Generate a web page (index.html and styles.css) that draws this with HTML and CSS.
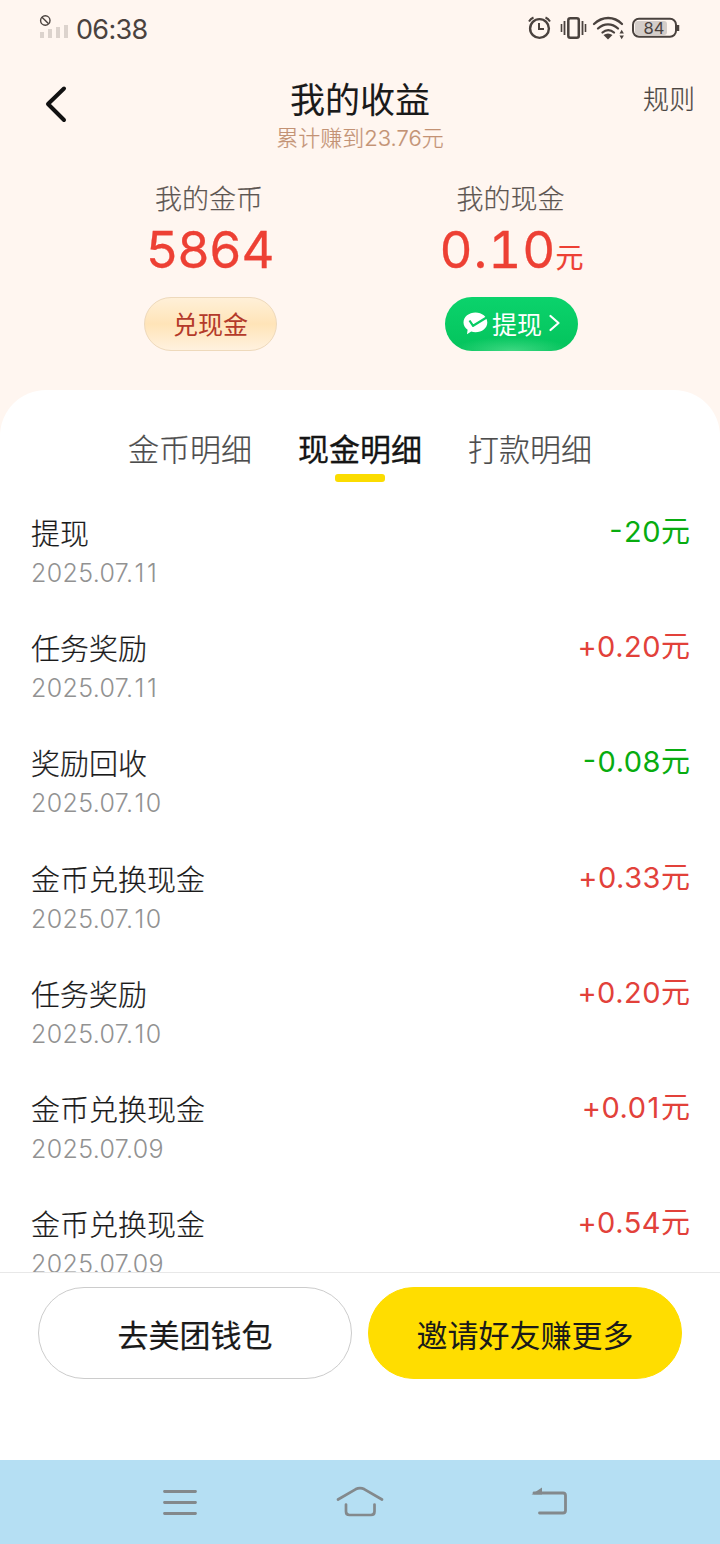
FILE: index.html
```html
<!DOCTYPE html>
<html lang="zh-CN">
<head>
<meta charset="utf-8">
<title>我的收益</title>
<link rel="stylesheet" href="styles.css">
</head>
<body>
<div class="app">
  <div class="status">
    <div class="status-left">
      <svg class="signal" width="32" height="28" viewBox="0 0 32 28" fill="none">
        <circle cx="7.3" cy="6.5" r="4.7" stroke="#4a423e" stroke-width="1.4"/>
        <path d="M4 3.2l6.6 6.600" stroke="#4a423e" stroke-width="1.4"/>
        <path d="M4 24v-6M12 24v-9M20 24V13M28 24V11" stroke="#dcd3cd" stroke-width="4"/>
      </svg>
      <span class="clock">06:38</span>
    </div>
    <svg class="status-icons" width="156" height="28" viewBox="0 0 156 28" fill="none" stroke="#4a423e">
      <circle cx="14.5" cy="14.5" r="9.4" stroke-width="2.4"/>
      <path d="M14 9v6h5" stroke-width="2"/>
      <path d="M4 7.5a10 10 0 0 1 4.500-4M25 7.500a10 10 0 0 0-4.500-4" stroke-width="2"/>
      <rect x="43.300" y="4.300" width="10.500" height="19.500" rx="2" stroke-width="2.500"/>
      <path d="M39.500 7v14M57.500 7v14" stroke-width="1.800"/>
      <path d="M36.500 10v8M60.500 10v8" stroke-width="1.600"/>
      <path d="M69 10c8.500-8 20-8 28 0M73 14.500c6-5.500 14-5.500 20 0M77.500 18.500c3.500-3 8-3 11.500 0" stroke-width="2.300" stroke-linecap="round"/>
      <path d="M78.500 21q4.500-3 9 0l-4.500 4.500z" fill="#4a423e" stroke="none"/>
      <path d="M94.500 19.500l2.200-3.800l2.200 3.800zM94.500 21.500l2.200 3.800l2.200-3.800z" fill="#4a423e" stroke="none"/>
      <rect x="110" y="7" width="32" height="14" rx="3" fill="#d4cdc9" stroke="none"/>
      <rect x="108" y="4.800" width="43" height="18" rx="6" stroke-width="2"/>
      <path d="M153 11v6" stroke-width="2.500"/>
      <text class="battery" x="129" y="20" text-anchor="middle">84</text>
    </svg>
  </div>

  <header class="header">
    <svg class="back" width="24" height="38" viewBox="0 0 24 38" fill="none" stroke="#111" stroke-width="4" stroke-linecap="round" stroke-linejoin="round"><path d="M20 3.500L4 19l16 16"/></svg>
    <div class="heading">
      <h1 class="title">我的收益</h1>
      <p class="subtitle">累计赚到23.76元</p>
    </div>
    <a class="rules">规则</a>
  </header>

  <section class="balances">
    <div class="balance">
      <span class="label shift">我的金币</span>
      <span class="value">5864</span>
      <button class="pill gold">兑现金</button>
    </div>
    <div class="balance">
      <span class="label shift-cash">我的现金</span>
      <span class="value cash">0.10<small class="unit">元</small></span>
      <button class="pill green">
        <svg width="25" height="23" viewBox="0 0 25 23"><path d="M12.500.5C19 .5 24.300 4.800 24.300 10.500S19 20.300 12.500 20.300c-1.500 0-3-.2-4.300-.7L4 22.200l.6-4.400C2 16 .5 13.400.5 10.500.5 4.800 6 .5 12.500.5z" fill="#fff"/><path d="M6.500 8.500l3.600 5.300L24 5.200" fill="none" stroke="#07cc65" stroke-width="2.200" stroke-linejoin="round"/></svg>
        <span class="pill-text">提现</span>
        <svg class="chevron" width="11" height="18" viewBox="0 0 11 18" fill="none" stroke="#fff" stroke-width="2.200" stroke-linecap="round" stroke-linejoin="round"><path d="M1.500 2l8 7-8 7"/></svg>
      </button>
    </div>
  </section>

  <main class="sheet">
    <nav class="tabs">
      <a class="tab">金币明细</a>
      <a class="tab active">现金明细</a>
      <a class="tab">打款明细</a>
    </nav>
    <ul class="list">
      <li class="row"><div><div class="name">提现</div><div class="date">2025.07.<span class="one">1</span><span class="one">1</span></div></div><div class="amount out"><span class="minus">-</span>20元</div></li>
      <li class="row"><div><div class="name">任务奖励</div><div class="date">2025.07.<span class="one">1</span><span class="one">1</span></div></div><div class="amount">+0.20元</div></li>
      <li class="row"><div><div class="name">奖励回收</div><div class="date">2025.07.<span class="one">1</span>0</div></div><div class="amount out"><span class="minus">-</span>0.08元</div></li>
      <li class="row"><div><div class="name">金币兑换现金</div><div class="date">2025.07.<span class="one">1</span>0</div></div><div class="amount">+0.33元</div></li>
      <li class="row"><div><div class="name">任务奖励</div><div class="date">2025.07.<span class="one">1</span>0</div></div><div class="amount">+0.20元</div></li>
      <li class="row"><div><div class="name">金币兑换现金</div><div class="date">2025.07.09</div></div><div class="amount">+0.0<span class="one">1</span>元</div></li>
      <li class="row"><div><div class="name">金币兑换现金</div><div class="date">2025.07.09</div></div><div class="amount">+0.54元</div></li>
    </ul>
  </main>

  <footer class="actions">
    <button class="action">去美团钱包</button>
    <button class="action primary">邀请好友赚更多</button>
  </footer>

  <div class="navbar">
    <svg width="36" height="30" viewBox="0 0 36 30" fill="none" stroke="#83898c" stroke-width="2.800" stroke-linecap="round"><path d="M2.500 4.500h31M2.500 15.500h31M2.500 26.500h31"/></svg>
    <svg class="home" width="50" height="34" viewBox="0 0 50 34" fill="none" stroke="#83898c" stroke-width="2.700" stroke-linecap="round" stroke-linejoin="round"><path d="M3 15.500L20.500 5.300q4.500-2.400 9 0L47 15.500M11 20.500v7q0 3.500 3.500 3.500h21.500q3.500 0 3.500-3.500V20.500"/></svg>
    <svg class="return" width="38" height="32" viewBox="0 0 38 32" fill="none" stroke="#83898c" stroke-width="2.800" stroke-linecap="round"><path d="M4 7h29q2.500 0 2.500 2.500v15q0 2.500-2.500 2.500H9.500"/><path d="M1.500 8.400L12 1.500v6.900z" fill="#83898c" stroke="none"/></svg>
  </div>
</div>
</body>
</html>
```
FILE: styles.css
```css
* { box-sizing: border-box; }
body { margin: 0; font-family: Inter, "Noto Sans CJK SC", sans-serif; color: #1a1a1a; }
h1, p, ul { margin: 0; padding: 0; font-weight: 400; list-style: none; }
button { font: inherit; color: inherit; padding: 0; border: 0; }

.app { width: 720px; height: 1544px; display: flex; flex-direction: column; background: #fff6f0; overflow: hidden; }

.status { height: 56px; flex: none; display: flex; justify-content: space-between; padding: 14px 39px 0 38px; color: #4a423e; }
.status-left { display: flex; gap: 6px; }
.clock { font-size: 27px; line-height: 32px; letter-spacing: -0.7px; }
.battery { font-family: Inter, sans-serif; font-size: 16.500px; fill: #4a423e; stroke: none; }

.header { height: 124px; flex: none; display: grid; grid-template-columns: 160px 1fr 160px; padding-top: 19px; }
.back { margin: 10px 0 0 44px; }
.heading { text-align: center; }
.title { font-size: 35px; line-height: 50px; -webkit-text-stroke: 0.1px; }
.subtitle { font-size: 22px; line-height: 26px; font-weight: 300; color: #c39274; -webkit-text-stroke: 0.2px; }
.rules { justify-self: end; margin-right: 25px; font-size: 26px; line-height: 49px; font-weight: 300; color: #4c4642; -webkit-text-stroke: 0.2px; }

.balances { height: 210px; flex: none; display: grid; grid-template-columns: 301px 301px; padding: 1px 0 0 60px; }
.balance { display: flex; flex-direction: column; align-items: center; }
.label { font-size: 27px; line-height: 37px; font-weight: 300; color: #5c5551; -webkit-text-stroke: 0.2px; }
.shift { margin-right: 3px; }
.shift-cash { margin-right: 2px; }
.value { font-size: 51px; line-height: 64px; height: 79px; color: #ed4034; -webkit-text-stroke: 0.3px; letter-spacing: 0.3px; }
.cash { letter-spacing: 1px; font-feature-settings: "tnum"; }
.unit { font-size: 28px; margin-left: -1px; letter-spacing: 0; -webkit-text-stroke: 0.2px; }
.pill { width: 133px; height: 54px; border-radius: 27px; font-size: 25px; display: flex; align-items: center; justify-content: center; padding-bottom: 2px; }
.gold { color: #b43a2a; border: 1px solid #eed9bb; background: linear-gradient(#fff0d8, #ffe4b8 50%, #fff1df); }
.green { color: #fff; background: radial-gradient(ellipse 60px 14px at 50% 100%, #3ed882, transparent), linear-gradient(#0bd36c, #04c35c); }
.pill-text { margin-left: 4px; }
.chevron { margin-left: 7px; }

.sheet { flex: 1; min-height: 0; background: #fff; border-radius: 46px 46px 0 0; padding-top: 36px; overflow: hidden; }
.tabs { display: flex; justify-content: center; gap: 46px; height: 83px; }
.tab { font-size: 31px; line-height: 48px; font-weight: 300; color: #4c4c4c; height: 56px; position: relative; -webkit-text-stroke: 0.2px; }
.active { font-weight: 400; color: #151515; -webkit-text-stroke: 0.3px; }
.active::after { content: ""; position: absolute; left: 50%; bottom: 0; width: 50px; height: 8px; margin-left: -25px; border-radius: 3px; background: #fbdc00; }

.row { height: 115.200px; display: flex; justify-content: space-between; padding: 4px 30px 0 31px; }
.name { font-size: 29px; line-height: 44px; font-weight: 300; -webkit-text-stroke: 0.2px; }
.date { font-size: 25px; line-height: 32px; font-weight: 300; color: #929292; letter-spacing: 0.35px; }
.one { margin: 0 1.1px; }
.amount { font-size: 29px; line-height: 38px; color: #e2413a; letter-spacing: 0.5px; margin-right: -0.5px; }
.minus { display: inline-block; transform: translateY(-2px); margin-right: 1px; }
.out { color: #08ac10; }

.actions { height: 188px; flex: none; display: flex; gap: 16px; align-items: flex-start; background: #fff; border-top: 1px solid #e8e8e8; padding: 14px 38px 0; }
.action { width: 314px; height: 92px; border-radius: 46px; background: #fff; border: 1px solid #ccc; font-size: 31px; line-height: 46px; padding-top: 5px; -webkit-text-stroke: 0.2px; }
.primary { background: #ffdd00; border-color: #ffdd00; -webkit-text-stroke: 0; }

.navbar { height: 84px; flex: none; display: flex; align-items: center; justify-content: space-between; padding: 0 151px 0 162px; background: #b5dff3; }
.home { margin: -3px 8px 0 0; }
.return { margin: -1px 1px 0 0; }
```
